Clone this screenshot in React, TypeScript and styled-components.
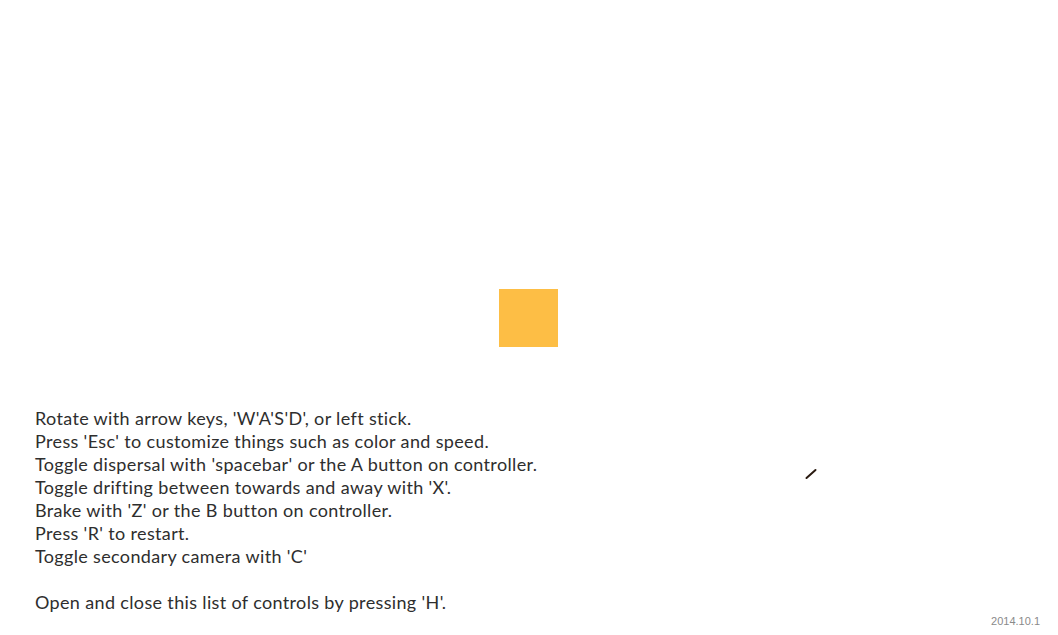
import React from "react";
import styled, { createGlobalStyle } from "styled-components";

const GlobalStyle = createGlobalStyle`
  html, body {
    margin: 0;
    padding: 0;
    background: #ffffff;
  }
`;

const Stage = styled.div`
  position: relative;
  width: 100vw;
  height: 100vh;
  overflow: hidden;
  display: flex;
  align-items: center;
  justify-content: center;
  background: #ffffff;
`;

const Player = styled.div`
  width: 59px;
  height: 58px;
  margin-left: -1px;
  margin-top: 1px;
  background: #fdbe45;
`;

const Particle = styled.svg`
  position: absolute;
  left: 804px;
  top: 467px;
`;

const Controls = styled.ul`
  position: absolute;
  left: 35px;
  bottom: 21px;
  margin: 0;
  padding: 0;
  list-style: none;
  font-family: "Lato", "Open Sans", sans-serif;
  font-size: 18px;
  letter-spacing: 0.35px;
  line-height: 23px;
  color: #2e2e2e;
`;

const Line = styled.li<{ gap?: boolean }>`
  margin-top: ${({ gap }) => (gap ? "23px" : "0")};
  white-space: nowrap;
`;

const Version = styled.div`
  position: absolute;
  right: 18px;
  bottom: 8px;
  font-family: "Liberation Sans", Arial, sans-serif;
  font-size: 11px;
  color: #8a8a8a;
`;

const lines = [
  "Rotate with arrow keys, 'W'A'S'D', or left stick.",
  "Press 'Esc' to customize things such as color and speed.",
  "Toggle dispersal with 'spacebar' or the A button on controller.",
  "Toggle drifting between towards and away with 'X'.",
  "Brake with 'Z' or the B button on controller.",
  "Press 'R' to restart.",
  "Toggle secondary camera with 'C'",
];

export default function App() {
  return (
    <>
      <GlobalStyle />
      <Stage>
        <Player />
        <Particle width="14" height="14" viewBox="0 0 14 14">
          <line x1="2.5" y1="11" x2="11.5" y2="3" stroke="#2a1a10" strokeWidth="2" strokeLinecap="round" />
        </Particle>
        <Controls>
          {lines.map((l) => (
            <Line key={l}>{l}</Line>
          ))}
          <Line gap>Open and close this list of controls by pressing 'H'.</Line>
        </Controls>
        <Version>2014.10.1</Version>
      </Stage>
    </>
  );
}
